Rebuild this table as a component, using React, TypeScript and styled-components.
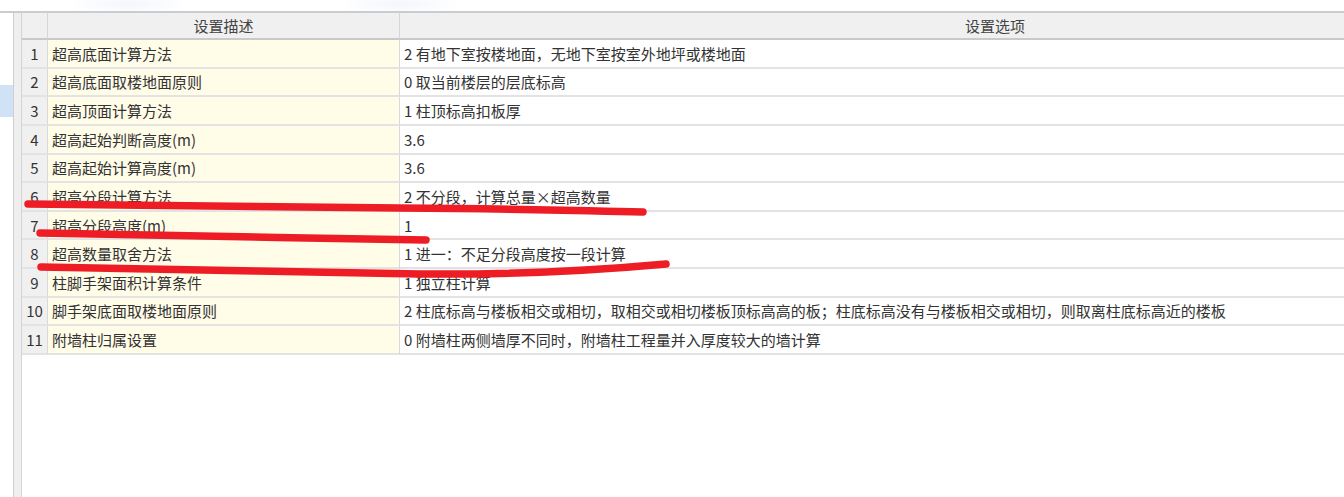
import React from "react";
import styled, { createGlobalStyle } from "styled-components";

const GlobalStyle = createGlobalStyle`
  html, body { margin: 0; padding: 0; background: #ffffff; overflow: hidden; }
  body { font-family: "Noto Sans CJK SC", "Noto Sans", "Liberation Sans", sans-serif; }
  * { box-sizing: border-box; }
`;

const Page = styled.div`
  width: 1344px;
  height: 497px;
  position: relative;
  overflow: hidden;
  background: #ffffff;
  display: flex;
  flex-direction: column;
`;

const TopStrip = styled.div`
  height: 11px;
  flex: none;
  background:
    radial-gradient(ellipse 60px 10px at 130px 4px, #f3f6fb 0%, rgba(255,255,255,0) 100%),
    radial-gradient(ellipse 60px 10px at 400px 4px, #f3f6fb 0%, rgba(255,255,255,0) 100%),
    #ffffff;
`;

const Main = styled.div`
  flex: 1;
  display: flex;
  border-top: 2px solid #c9ccd0;
  min-height: 0;
`;

const LeftPanel = styled.div`
  width: 14px;
  flex: none;
  background: #ffffff;
  border-right: 1px solid #cfcfcf;
  padding-top: 72px;
`;

const LeftSelection = styled.div`
  height: 32px;
  background: #cfe2f6;
`;

const Splitter = styled.div`
  width: 8px;
  flex: none;
  background: #efefef;
  border-right: 1px solid #d4d4d4;
`;

const TableArea = styled.div`
  flex: 1;
  overflow: hidden;
  min-width: 0;
`;

const Grid = styled.div`
  width: 1569px;
  display: grid;
  grid-template-columns: 26px 352px 1191px;
`;

const HeaderCell = styled.div`
  height: 27px;
  background: #f0f0f0;
  border-bottom: 2px solid #c9c9c9;
  border-right: 1px solid #d6d6d6;
  display: flex;
  align-items: center;
  justify-content: center;
  font-size: 15px;
  color: #444;
  padding-bottom: 1px;
`;

const Cell = styled.div<{ $kind: "num" | "desc" | "value" }>`
  height: 28.64px;
  border-bottom: 2px solid #e3e3e3;
  border-right: 1px solid ${(p) => (p.$kind === "value" ? "transparent" : "#d9d9d9")};
  background: ${(p) =>
    p.$kind === "num" ? "#f0f0f0" : p.$kind === "desc" ? "#fffce8" : "#ffffff"};
  display: flex;
  align-items: center;
  justify-content: ${(p) => (p.$kind === "num" ? "center" : "flex-start")};
  padding-left: ${(p) => (p.$kind === "num" ? "0" : "4px")};
  font-size: 15px;
  color: #333333;
  white-space: nowrap;
  overflow: hidden;
`;

const Marks = styled.svg`
  position: absolute;
  left: 0;
  top: 0;
  pointer-events: none;
`;

const rows: [string, string][] = [
  ["超高底面计算方法", "2 有地下室按楼地面，无地下室按室外地坪或楼地面"],
  ["超高底面取楼地面原则", "0 取当前楼层的层底标高"],
  ["超高顶面计算方法", "1 柱顶标高扣板厚"],
  ["超高起始判断高度(m)", "3.6"],
  ["超高起始计算高度(m)", "3.6"],
  ["超高分段计算方法", "2 不分段，计算总量×超高数量"],
  ["超高分段高度(m)", "1"],
  ["超高数量取舍方法", "1 进一：不足分段高度按一段计算"],
  ["柱脚手架面积计算条件", "1 独立柱计算"],
  [
    "脚手架底面取楼地面原则",
    "2 柱底标高与楼板相交或相切，取相交或相切楼板顶标高高的板；柱底标高没有与楼板相交或相切，则取离柱底标高近的楼板",
  ],
  ["附墙柱归属设置", "0 附墙柱两侧墙厚不同时，附墙柱工程量并入厚度较大的墙计算"],
];

export default function App() {
  return (
    <>
      <GlobalStyle />
      <Page>
        <TopStrip />
        <Main>
          <LeftPanel>
            <LeftSelection />
          </LeftPanel>
          <Splitter />
          <TableArea>
            <Grid>
              <HeaderCell />
              <HeaderCell>设置描述</HeaderCell>
              <HeaderCell>设置选项</HeaderCell>
              {rows.map(([d, v], i) => (
                <React.Fragment key={i}>
                  <Cell $kind="num">{i + 1}</Cell>
                  <Cell $kind="desc">{d}</Cell>
                  <Cell $kind="value">{v}</Cell>
                </React.Fragment>
              ))}
            </Grid>
          </TableArea>
        </Main>
        <Marks width="1344" height="497" viewBox="0 0 1344 497">
          <g fill="none" stroke="#ee1c25" strokeWidth="7.5" strokeLinecap="round" strokeLinejoin="round">
            <path d="M28 204 C 120 206, 250 207, 400 208 S 580 211, 643 212" />
            <path d="M40 233 C 150 235, 300 238, 426 240" />
            <path d="M41 267 C 150 269, 300 272, 420 274 C 520 275, 600 270, 666 264" />
          </g>
        </Marks>
      </Page>
    </>
  );
}
